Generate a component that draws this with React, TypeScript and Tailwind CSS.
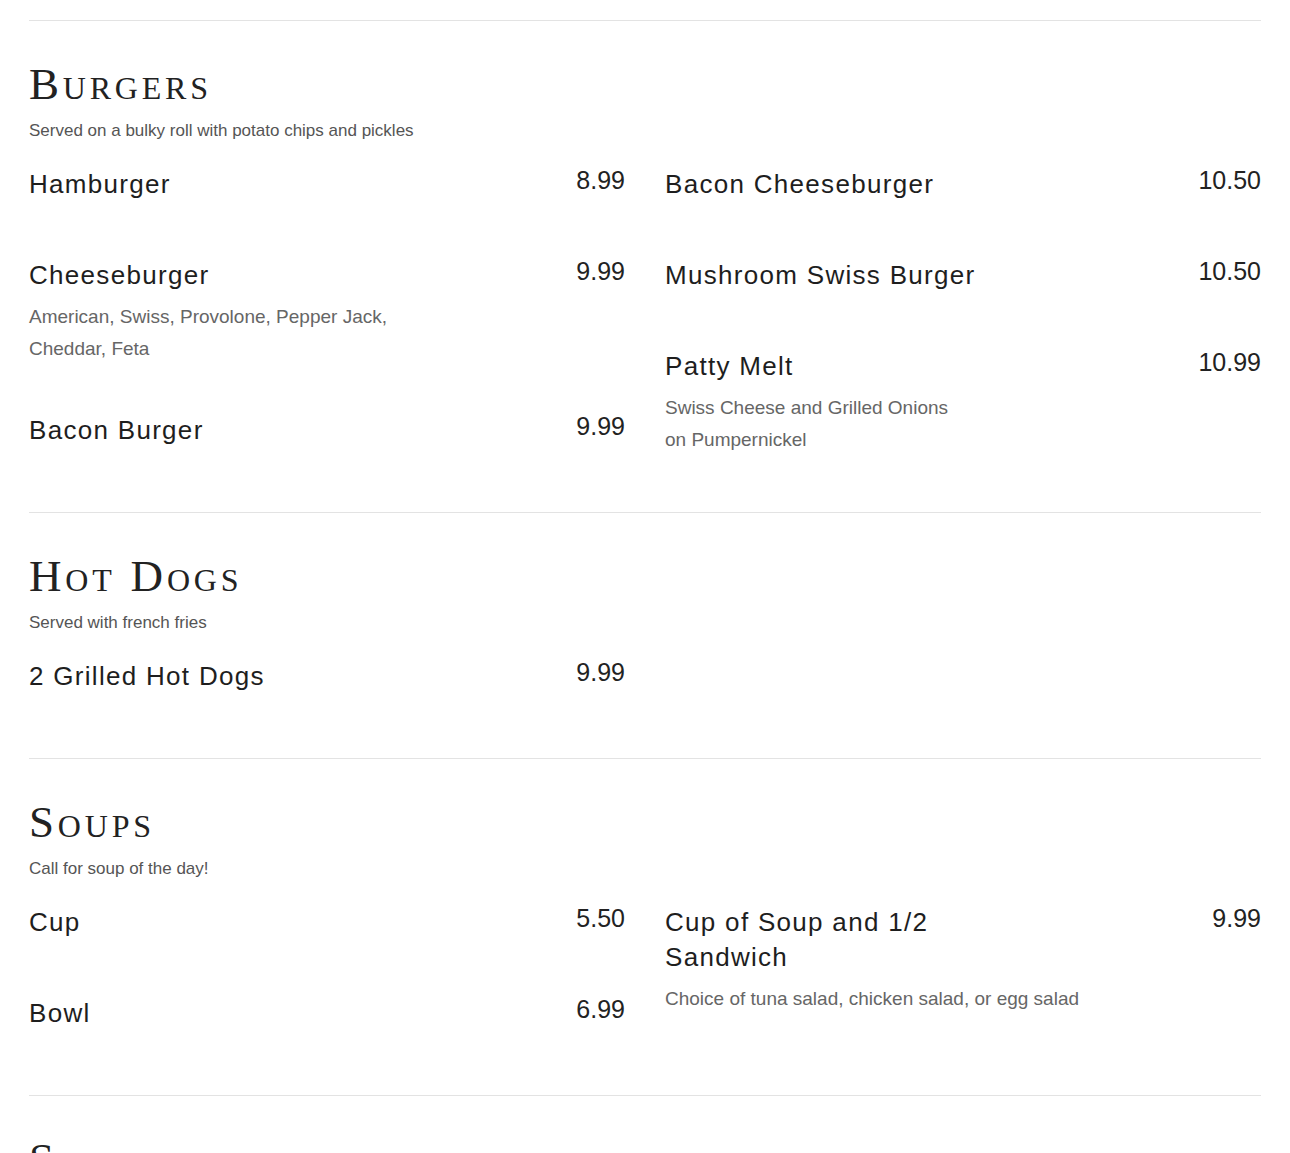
import React from 'react';

type Item = { name: string; price: string; desc?: string[] };
type Section = { title: string; note: string; left: Item[]; right: Item[] };

const sections: Section[] = [
  {
    title: 'Burgers',
    note: 'Served on a bulky roll with potato chips and pickles',
    left: [
      { name: 'Hamburger', price: '8.99' },
      { name: 'Cheeseburger', price: '9.99', desc: ['American, Swiss, Provolone, Pepper Jack,', 'Cheddar, Feta'] },
      { name: 'Bacon Burger', price: '9.99' },
    ],
    right: [
      { name: 'Bacon Cheeseburger', price: '10.50' },
      { name: 'Mushroom Swiss Burger', price: '10.50' },
      { name: 'Patty Melt', price: '10.99', desc: ['Swiss Cheese and Grilled Onions', 'on Pumpernickel'] },
    ],
  },
  {
    title: 'Hot Dogs',
    note: 'Served with french fries',
    left: [{ name: '2 Grilled Hot Dogs', price: '9.99' }],
    right: [],
  },
  {
    title: 'Soups',
    note: 'Call for soup of the day!',
    left: [
      { name: 'Cup', price: '5.50' },
      { name: 'Bowl', price: '6.99' },
    ],
    right: [
      { name: 'Cup of Soup and 1/2 Sandwich', price: '9.99', desc: ['Choice of tuna salad, chicken salad, or egg salad'] },
    ],
  },
];

function MenuItem({ item }: { item: Item }) {
  return (
    <div className="mb-12">
      <div className="flex items-start justify-between pb-2">
        <h3 className="max-w-[60%] text-[26px] leading-[35px] tracking-[1.3px] text-[#1e1e1e]">{item.name}</h3>
        <span className="text-[25px] leading-[26px] text-[#222]">{item.price}</span>
      </div>
      {item.desc && (
        <p className="text-[19px] leading-[32px] text-[#666]">
          {item.desc.map((line, i) => (
            <React.Fragment key={i}>
              {i > 0 && <br />}
              {line}
            </React.Fragment>
          ))}
        </p>
      )}
    </div>
  );
}

export default function App() {
  return (
    <div className="min-h-screen bg-white px-[29px] pt-5 font-['Liberation_Sans',Arial,sans-serif]">
      {sections.map((s) => (
        <section key={s.title} className="border-t border-[#e3e3e3] pt-[41px] pb-2">
          <h2 className="font-['Liberation_Serif',serif] text-[45px] leading-[45px] tracking-[3.8px] text-[#222] [font-variant-caps:small-caps]">
            {s.title}
          </h2>
          <p className="mt-3 text-[17px] leading-[24px] text-[#555]">{s.note}</p>
          <div className="mt-6 grid grid-cols-2 gap-x-10">
            <div>
              {s.left.map((it) => (
                <MenuItem key={it.name} item={it} />
              ))}
            </div>
            <div>
              {s.right.map((it) => (
                <MenuItem key={it.name} item={it} />
              ))}
            </div>
          </div>
        </section>
      ))}
      <section className="border-t border-[#e3e3e3] pt-[41px]">
        <h2 className="font-['Liberation_Serif',serif] text-[45px] leading-[45px] tracking-[3.8px] text-[#222] [font-variant-caps:small-caps]">
          Salads
        </h2>
      </section>
    </div>
  );
}
